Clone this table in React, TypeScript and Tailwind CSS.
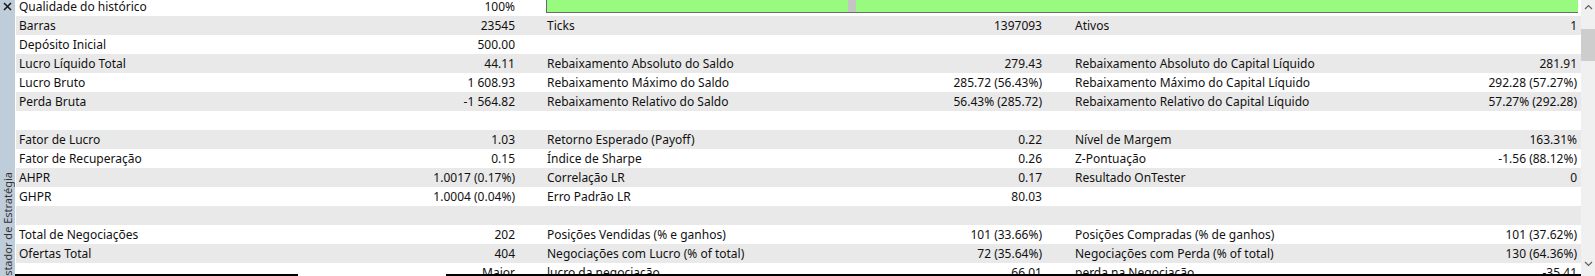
import React from 'react';

type Row = [string, string, string?, string?, string?, string?];

const rows: Row[] = [
  ['Qualidade do histórico', '100%'],
  ['Barras', '23545', 'Ticks', '1397093', 'Ativos', '1'],
  ['Depósito Inicial', '500.00'],
  ['Lucro Líquido Total', '44.11', 'Rebaixamento Absoluto do Saldo', '279.43', 'Rebaixamento Absoluto do Capital Líquido', '281.91'],
  ['Lucro Bruto', '1 608.93', 'Rebaixamento Máximo do Saldo', '285.72 (56.43%)', 'Rebaixamento Máximo do Capital Líquido', '292.28 (57.27%)'],
  ['Perda Bruta', '-1 564.82', 'Rebaixamento Relativo do Saldo', '56.43% (285.72)', 'Rebaixamento Relativo do Capital Líquido', '57.27% (292.28)'],
  ['', ''],
  ['Fator de Lucro', '1.03', 'Retorno Esperado (Payoff)', '0.22', 'Nível de Margem', '163.31%'],
  ['Fator de Recuperação', '0.15', 'Índice de Sharpe', '0.26', 'Z-Pontuação', '-1.56 (88.12%)'],
  ['AHPR', '1.0017 (0.17%)', 'Correlação LR', '0.17', 'Resultado OnTester', '0'],
  ['GHPR', '1.0004 (0.04%)', 'Erro Padrão LR', '80.03'],
  ['', ''],
  ['Total de Negociações', '202', 'Posições Vendidas (% e ganhos)', '101 (33.66%)', 'Posições Compradas (% de ganhos)', '101 (37.62%)'],
  ['Ofertas Total', '404', 'Negociações com Lucro (% of total)', '72 (35.64%)', 'Negociações com Perda (% of total)', '130 (64.36%)'],
  ['', 'Maior', 'lucro da negociação', '66.01', 'perda na Negociação', '-35.41'],
];

function QualityBar() {
  return (
    <div className="relative ml-[31px] mt-[1px] h-[15px] w-[1032px] border-l border-b border-t border-[#6a6a6a] bg-[#98fb7f]">
      <div className="absolute top-0 bottom-0 left-[301px] w-[8px] bg-[#c4c4c4]" />
    </div>
  );
}

function StatRow({ row, index }: { row: Row; index: number }) {
  const [l1, v1, l2, v2, l3, v3] = row;
  return (
    <div className={`ml-[1px] flex h-[19px] items-start leading-[19px] whitespace-nowrap ${index % 2 ? 'bg-[#e9e9e9]' : 'bg-white'}`}>
      <div className="w-[240px] pl-[3px]">{l1}</div>
      <div className="w-[259px] text-right">{v1}</div>
      {index === 0 ? (
        <QualityBar />
      ) : (
        <>
          <div className="w-[268px] pl-[32px]">{l2}</div>
          <div className="w-[259px] text-right">{v2}</div>
          <div className="w-[268px] pl-[33px]">{l3}</div>
          <div className="flex-1 pr-[4px] text-right">{v3}</div>
        </>
      )}
    </div>
  );
}

export default function App() {
  return (
    <div className="flex h-[276px] w-[1595px] overflow-hidden bg-white text-[12px] text-[#111] [font-family:'Noto_Sans','Liberation_Sans',sans-serif]">
      {/* docked panel tab */}
      <div className="flex w-[15px] shrink-0 flex-col items-center bg-[#bfcddb] text-[#333]">
        <svg width="15" height="14" viewBox="0 0 15 14" className="shrink-0">
          <path d="M4 3 L11 10 M11 3 L4 10" stroke="#1a1a1a" strokeWidth="1.6" />
        </svg>
        <div className="mt-[158px] rotate-180 whitespace-nowrap text-[11px] leading-[13px] [writing-mode:vertical-rl]">
          Testador de Estratégia
        </div>
      </div>

      <div className="relative flex-1 overflow-hidden">
        <div className="mt-[-3px]">
          {rows.map((r, i) => (
            <StatRow key={i} row={r} index={i} />
          ))}
        </div>
        {/* edges of the panels below, cut by the window */}
        <div className="absolute left-0 top-[274px] h-[20px] w-[283px] border-2 border-black bg-white" />
        <div className="absolute left-[431px] top-[274px] h-[20px] w-[1140px] border-2 border-black bg-white" />
      </div>

      {/* scrollbar */}
      <div className="flex w-[14px] shrink-0 flex-col items-center bg-[#f0f0f0] text-[#606060]">
        <svg width="9" height="16" viewBox="0 0 9 16" className="shrink-0">
          <path d="M1 9 L4.5 5.5 L8 9" fill="none" stroke="#606060" strokeWidth="1.2" />
        </svg>
        <div className="mt-[13px] h-[32px] w-full bg-[#cdcdcd]" />
        <div className="flex-1" />
        <svg width="9" height="16" viewBox="0 0 9 16" className="mb-[4px] shrink-0">
          <path d="M1 6 L4.5 9.5 L8 6" fill="none" stroke="#606060" strokeWidth="1.2" />
        </svg>
      </div>
    </div>
  );
}
